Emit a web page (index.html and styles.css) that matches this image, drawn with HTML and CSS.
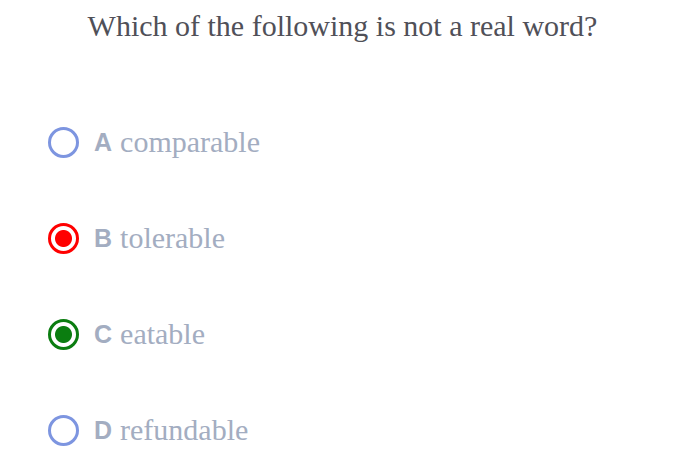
FILE: index.html
```html
<!DOCTYPE html>
<html lang="en">
<head>
    <meta charset="UTF-8">
    <meta name="viewport" content="width=device-width, initial-scale=1.0">
    <title>Quiz</title>
    <link rel="stylesheet" href="styles.css">
</head>
<body>
    <div class="quiz">
        <h1 class="question">Which of the following is not a real word?</h1>

        <ul class="options">
            <li class="option">
                <span class="radio"></span>
                <span class="letter">A</span>
                <span class="word">comparable</span>
            </li>
            <li class="option wrong">
                <span class="radio"></span>
                <span class="letter">B</span>
                <span class="word">tolerable</span>
            </li>
            <li class="option right">
                <span class="radio"></span>
                <span class="letter">C</span>
                <span class="word">eatable</span>
            </li>
            <li class="option">
                <span class="radio"></span>
                <span class="letter">D</span>
                <span class="word">refundable</span>
            </li>
        </ul>
    </div>
</body>
</html>
```

FILE: styles.css
```css
body {
    margin: 0;
    background: #ffffff;
    font-family: "Liberation Serif", "Times New Roman", serif;
}
.quiz {
    padding: 6px 0 0 48px;
}
.question {
    margin: 0;
    padding-right: 56px;
    text-align: center;
    font-size: 30px;
    font-weight: normal;
    line-height: 40px;
    color: #505058;
}
.options {
    list-style: none;
    margin: 78px 0 0 0;
    padding: 0;
    display: flex;
    flex-direction: column;
    gap: 60px;
}
.option {
    display: flex;
    align-items: center;
    height: 36px;
    color: #a3adc1;
}
.radio {
    box-sizing: border-box;
    width: 31px;
    height: 31px;
    border: 3px solid #7d95e0;
    border-radius: 50%;
    margin-right: 15px;
    background: #fff;
}
.wrong .radio {
    border-color: #ff0000;
    background: radial-gradient(circle, #ff0000 0 8px, #fff 9px);
}
.right .radio {
    border-color: #0b7d10;
    background: radial-gradient(circle, #0b7d10 0 8px, #fff 9px);
}
.letter {
    font-family: "Liberation Sans", Arial, sans-serif;
    font-weight: bold;
    font-size: 25px;
    margin-right: 8px;
}
.word {
    font-size: 30px;
}
```
